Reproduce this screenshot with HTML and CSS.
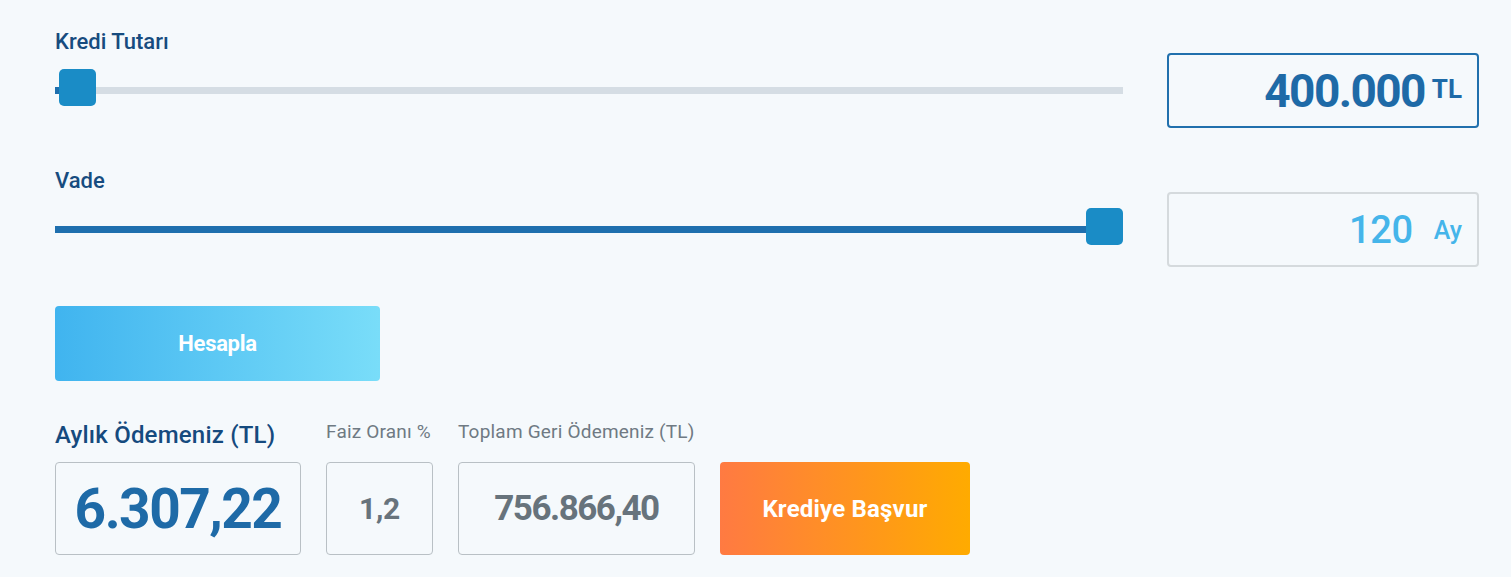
FILE: index.html
```html
<!DOCTYPE html>
<html lang="tr">
<head>
<meta charset="utf-8">
<title>Kredi Hesaplama</title>
<link rel="stylesheet" href="styles.css">
</head>
<body>
<div class="page">
  <div class="field">
    <div class="field-left">
      <div class="label">Kredi Tutarı</div>
      <div class="slider">
        <div class="track"><div class="fill" style="width:4px"></div></div>
        <div class="thumb" style="left:4px"></div>
      </div>
    </div>
    <div class="value-box value-box--active">
      <span class="amount">400.000</span><span class="unit-tl">TL</span>
    </div>
  </div>

  <div class="field field--second">
    <div class="field-left">
      <div class="label">Vade</div>
      <div class="slider">
        <div class="track"><div class="fill" style="width:1031px"></div></div>
        <div class="thumb" style="left:1031px"></div>
      </div>
    </div>
    <div class="value-box value-box--idle">
      <span class="term">120</span><span class="unit-ay">Ay</span>
    </div>
  </div>

  <button class="btn-calc">Hesapla</button>

  <div class="results">
    <div class="res res--monthly">
      <div class="res-label res-label--main">Aylık Ödemeniz (TL)</div>
      <div class="res-box"><span class="res-main">6.307,22</span></div>
    </div>
    <div class="res res--rate">
      <div class="res-label">Faiz Oranı %</div>
      <div class="res-box"><span class="res-rate">1,2</span></div>
    </div>
    <div class="res res--total">
      <div class="res-label">Toplam Geri Ödemeniz (TL)</div>
      <div class="res-box"><span class="res-total">756.866,40</span></div>
    </div>
    <button class="btn-apply">Krediye Başvur</button>
  </div>
</div>
</body>
</html>
```

FILE: styles.css
```css
* { box-sizing: border-box; }
html, body { margin: 0; padding: 0; }
body {
  background: #f5f9fc;
  font-family: Roboto, "Liberation Sans", Arial, sans-serif;
  width: 1511px;
  height: 577px;
  overflow: hidden;
}
.page {
  padding: 30px 0 0 55px;
}
.field {
  display: grid;
  grid-template-columns: 1068px 312px;
  column-gap: 44px;
  align-items: start;
}
.field--second { margin-top: 41px; }
.label {
  font-size: 22px;
  line-height: 24px;
  font-weight: 500;
  color: #174c7f;
}
.slider {
  position: relative;
  margin-top: 15px;
  padding-top: 18px;
  height: 37px;
}
.track {
  height: 7px;
  background: #d5dde4;
}
.fill {
  height: 100%;
  background: #1e6fae;
}
.thumb {
  position: absolute;
  top: 0;
  width: 37px;
  height: 37px;
  border-radius: 5px;
  background: #1a8cc6;
}
.value-box {
  margin-top: 23px;
  height: 75px;
  border-radius: 4px;
  display: flex;
  justify-content: flex-end;
  align-items: center;
  padding-right: 15px;
}
.value-box--active { border: 2px solid #2170ad; color: #1e6aa7; }
.value-box--idle { border: 2px solid #d5dadd; color: #45b5ea; }
.amount {
  font-size: 46px;
  font-weight: 700;
  letter-spacing: -1.6px;
}
.unit-tl {
  font-size: 26px;
  font-weight: 700;
  margin-left: 7px;
  margin-top: -4px;
}
.term {
  font-size: 38px;
  font-weight: 500;
  letter-spacing: -0.3px;
}
.unit-ay {
  font-size: 25px;
  font-weight: 500;
  margin-left: 21px;
  margin-top: 2px;
}
.btn-calc {
  display: block;
  margin-top: 39px;
  width: 325px;
  height: 75px;
  border: 0;
  border-radius: 4px;
  background: linear-gradient(90deg, #40b4ef 0%, #79ddf9 100%);
  color: #fff;
  font-family: inherit;
  font-size: 22px;
  font-weight: 700;
  letter-spacing: -0.3px;
  padding: 0;
}
.results {
  margin-top: 40px;
  display: flex;
  align-items: flex-end;
  gap: 25px;
}
.res--monthly { width: 246px; }
.res--rate { width: 107px; }
.res--total { width: 237px; }
.res-label {
  height: 41px;
  font-size: 19px;
  line-height: 22px;
  color: #6f7a83;
  white-space: nowrap;
  letter-spacing: 0.2px;
}
.res-label--main {
  font-size: 24px;
  line-height: 28px;
  font-weight: 500;
  color: #154a7e;
  letter-spacing: 0.2px;
}
.res-box {
  height: 93px;
  border: 1px solid #b9c0c5;
  border-radius: 4px;
  display: flex;
  align-items: center;
  justify-content: center;
}
.res-main {
  font-size: 55px;
  font-weight: 700;
  color: #1e6aa7;
  letter-spacing: -1.5px;
}
.res-rate {
  font-size: 30px;
  font-weight: 700;
  color: #67737c;
  letter-spacing: -0.3px;
}
.res-total {
  font-size: 35px;
  font-weight: 700;
  color: #67737c;
  letter-spacing: -1.5px;
}
.btn-apply {
  width: 250px;
  height: 93px;
  border: 0;
  border-radius: 4px;
  background: linear-gradient(90deg, #ff7a42 0%, #ffab00 100%);
  color: #fff;
  font-family: inherit;
  font-size: 24px;
  font-weight: 700;
  letter-spacing: 0.2px;
  padding: 0;
}
```
